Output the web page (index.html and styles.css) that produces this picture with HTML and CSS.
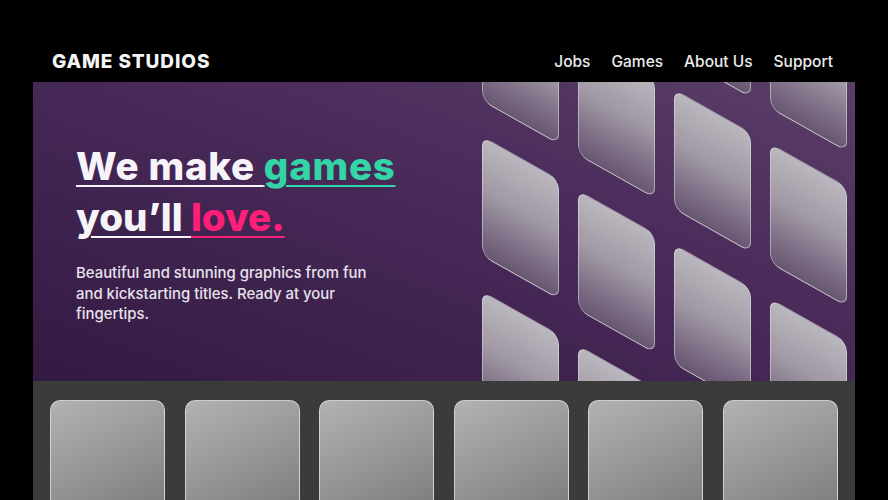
FILE: index.html
```html
<!DOCTYPE html>
<html lang="en">
<head>
<meta charset="utf-8">
<title>Game Studios</title>
<link rel="stylesheet" href="styles.css">
</head>
<body>
<div class="page">
  <header class="topbar">
    <div class="logo">GAME STUDIOS</div>
    <nav class="nav">
      <a href="#">Jobs</a>
      <a href="#">Games</a>
      <a href="#">About Us</a>
      <a href="#">Support</a>
    </nav>
  </header>
  <section class="hero">
    <div class="hero-text">
      <h1 class="headline"><span class="w">We make </span><span class="teal">games</span><br><span class="w tight">you’ll </span><span class="pink tight">love.</span></h1>
      <p class="lead">Beautiful and stunning graphics from fun and kickstarting titles. Ready at your fingertips.</p>
    </div>
    <div class="tiles">
      <div class="tile"></div><div class="tile"></div><div class="tile"></div><div class="tile"></div>
      <div class="tile"></div><div class="tile"></div><div class="tile"></div><div class="tile"></div>
      <div class="tile"></div><div class="tile"></div><div class="tile"></div><div class="tile"></div>
      <div class="tile"></div><div class="tile"></div><div class="tile"></div><div class="tile"></div>
    </div>
  </section>
  <section class="library">
    <div class="card"></div>
    <div class="card"></div>
    <div class="card"></div>
    <div class="card"></div>
    <div class="card"></div>
    <div class="card"></div>
  </section>
</div>
</body>
</html>
```
FILE: styles.css
```css
html, body {
  margin: 0;
  padding: 0;
  background: #000;
  overflow: hidden;
}

.page {
  margin: 0 33px;
  height: 500px;
  overflow: hidden;
}

.topbar {
  height: 82px;
  box-sizing: border-box;
  padding: 40px 22px 0 19px;
  display: flex;
  align-items: center;
  justify-content: space-between;
}

.logo {
  font-family: Inter, "Liberation Sans", sans-serif;
  font-weight: 800;
  font-size: 19px;
  letter-spacing: 0.9px;
  color: #f4f4f4;
}

.nav {
  display: flex;
  gap: 21px;
}

.nav a {
  font-family: Inter, "Liberation Sans", sans-serif;
  font-weight: 500;
  font-size: 15.5px;
  color: #ececec;
  text-decoration: none;
}

.hero {
  height: 299px;
  display: flex;
  overflow: hidden;
  background: linear-gradient(200deg, #5a3e68 0%, #4a2b5a 40%, #321a42 100%);
}

.hero-text {
  padding: 59px 0 0 43px;
  width: 360px;
  flex: none;
}

.headline {
  margin: 0;
  font-family: Inter, "Liberation Sans", sans-serif;
  font-weight: 800;
  font-size: 38.5px;
  line-height: 51px;
  letter-spacing: 0.7px;
  white-space: nowrap;
}

.headline span {
  text-decoration: underline;
  text-decoration-thickness: 2px;
  text-underline-offset: 5px;
  text-decoration-skip-ink: auto;
}

.headline .tight {
  letter-spacing: 0;
}

.w {
  color: #f6f4f8;
  text-decoration-color: #dcd6e2;
}

.teal {
  color: #33d4a6;
}

.pink {
  color: #ff1e78;
}

.lead {
  margin: 20px 0 0;
  width: 310px;
  font-family: Inter, "Liberation Sans", sans-serif;
  font-weight: 500;
  font-size: 14.9px;
  line-height: 20.5px;
  color: #e8e2ec;
}

.tiles {
  margin: -256px 8px 0 auto;
  flex: none;
  display: grid;
  grid-template-columns: repeat(4, 77px);
  grid-auto-rows: 120px;
  column-gap: 19px;
  row-gap: 35px;
  align-self: flex-start;
  transform: skewY(29.4deg);
  transform-origin: 0 0;
}

.tile {
  box-sizing: border-box;
  border-radius: 10px;
  border: 1.5px solid rgba(225, 220, 228, 0.55);
  background: linear-gradient(to bottom, #bbb7be 0%, #a098a4 45%, #7b6c84 80%, #675670 100%);
}

.library {
  height: 119px;
  box-sizing: border-box;
  background: #3b3b3b;
  padding: 19px 17px 0;
  display: grid;
  grid-template-columns: repeat(6, 1fr);
  column-gap: 19.6px;
  overflow: hidden;
}

.card {
  height: 140px;
  box-sizing: border-box;
  border-radius: 10px;
  border: 1.5px solid rgba(225, 225, 225, 0.8);
  background: linear-gradient(155deg, #b2b2b2 0%, #939393 50%, #727272 100%);
}
```
